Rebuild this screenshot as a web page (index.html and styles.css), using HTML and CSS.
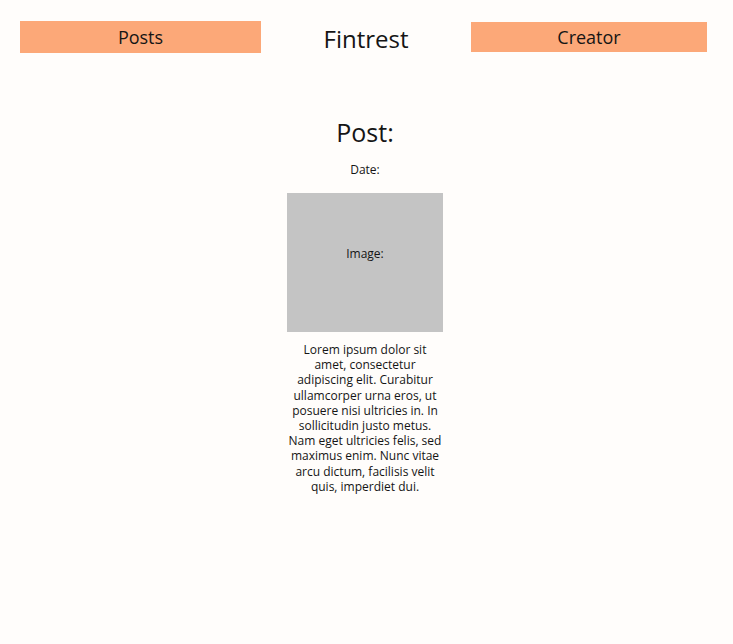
FILE: index.html
```html
<!DOCTYPE html>
<html>
<head>
<meta charset="utf-8">
<link rel="stylesheet" href="styles.css">
</head>
<body>
<header class="top">
  <a class="btn btn-posts">Posts</a>
  <h1 class="brand">Fintrest</h1>
  <a class="btn btn-creator">Creator</a>
</header>
<main class="post">
  <h2 class="post-title">Post:</h2>
  <p class="date">Date:</p>
  <div class="image"><span>Image:</span></div>
  <p class="body">Lorem ipsum dolor sit amet, consectetur adipiscing elit. Curabitur ullamcorper urna eros, ut posuere nisi ultricies in. In sollicitudin justo metus. Nam eget ultricies felis, sed maximus enim. Nunc vitae arcu dictum, facilisis velit quis, imperdiet dui.</p>
</main>
</body>
</html>
```
FILE: styles.css
```css
html, body {
  margin: 0;
  padding: 0;
  background: #fffdfb;
  color: #151515;
  font-family: "Open Sans", Lato, sans-serif;
}
body {
  width: 733px;
  height: 644px;
}
.top {
  display: flex;
  align-items: flex-start;
  padding: 21px 0 0 20px;
}
.btn {
  display: flex;
  align-items: center;
  justify-content: center;
  background: #fca878;
  font-size: 18px;
  color: #151515;
}
.btn-posts {
  width: 241px;
  height: 32px;
}
.btn-creator {
  width: 236px;
  height: 30px;
  margin-top: 1px;
}
.brand {
  width: 210px;
  margin: 0;
  text-align: center;
  font-size: 24px;
  font-weight: 400;
  line-height: 36px;
}
.post {
  display: flex;
  flex-direction: column;
  align-items: center;
  padding: 59px 3px 0 0;
}
.post-title {
  margin: 0;
  font-size: 25px;
  font-weight: 400;
  line-height: 32px;
}
.date {
  margin: 14px 0 0;
  font-size: 12px;
  line-height: 16px;
}
.image {
  margin-top: 15px;
  width: 156px;
  height: 139px;
  background: #c4c4c4;
  display: flex;
  justify-content: center;
  font-size: 12px;
  padding-top: 52px;
  box-sizing: border-box;
}
.body {
  margin: 10px 0 0;
  width: 156px;
  text-align: center;
  font-size: 12px;
  line-height: 15.2px;
}
```
